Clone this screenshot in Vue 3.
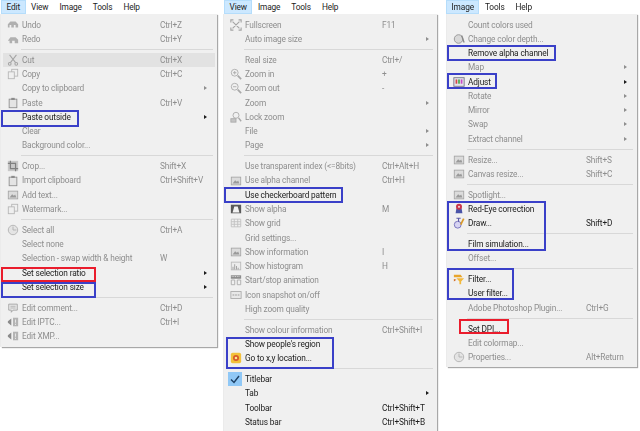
<script setup>
const S = { sep: true }
const d = (t, k = '', icon = '', sub = false) => ({ t, k, icon, sub, on: false })
const e = (t, k = '', icon = '', sub = false) => ({ t, k, icon, sub, on: true })

const panels = [
  {
    cls: 'p1',
    tabs: ['Edit', 'View', 'Image', 'Tools', 'Help'],
    items: [
      d('Undo', 'Ctrl+Z', 'undo'), d('Redo', 'Ctrl+Y', 'redo'), S,
      { ...d('Cut', 'Ctrl+X', 'cut'), hover: true }, d('Copy', 'Ctrl+C', 'copy'), d('Copy to clipboard', '', '', true),
      d('Paste', 'Ctrl+V', 'paste'), e('Paste outside', '', '', true), d('Clear'), d('Background color...'), S,
      d('Crop...', 'Shift+X', 'crop'), d('Import clipboard', 'Ctrl+Shift+V', 'paste'), d('Add text...', '', 'pic'), d('Watermark...', '', 'copy'), S,
      d('Select all', 'Ctrl+A', 'round'), d('Select none'), d('Selection - swap width & height', 'W'),
      e('Set selection ratio', '', '', true), e('Set selection size', '', '', true), S,
      d('Edit comment...', 'Ctrl+D', 'bubble'), d('Edit IPTC...', 'Ctrl+I', 'speak'), d('Edit XMP...', '', 'speak')
    ],
    marks: [
      { c: 'blue', x: 1, y: 110, w: 78, h: 17 },
      { c: 'red', x: 1, y: 267, w: 95, h: 15 },
      { c: 'blue', x: 1, y: 282, w: 95, h: 16 }
    ]
  },
  {
    cls: 'p2',
    tabs: ['View', 'Image', 'Tools', 'Help'],
    items: [
      d('Fullscreen', 'F11', 'full'), d('Auto image size', '', '', true), S,
      d('Real size', 'Ctrl+/'), d('Zoom in', '+', 'zin'), d('Zoom out', '-', 'zout'), d('Zoom', '', '', true),
      d('Lock zoom', '', 'zlock'), d('File', '', '', true), d('Page', '', '', true), S,
      d('Use transparent index (<=8bits)', 'Ctrl+Alt+H'), d('Use alpha channel', 'Ctrl+H', 'pic'), e('Use checkerboard pattern'),
      d('Show alpha', 'M', 'alpha'), d('Show grid', '', 'grid'), d('Grid settings...'), d('Show information', 'I', 'pic'),
      d('Show histogram', 'H', 'hist'), d('Start/stop animation', '', 'film'), d('Icon snapshot on/off', '', 'snap'), d('High zoom quality'), S,
      d('Show colour information', 'Ctrl+Shift+I'), e("Show people's region"), e('Go to x,y location...', '', 'goto'), S,
      { ...e('Titlebar'), check: true }, e('Tab', '', '', true), e('Toolbar', 'Ctrl+Shift+T'), e('Status bar', 'Ctrl+Shift+B')
    ],
    marks: [
      { c: 'blue', x: 4, y: 187, w: 119, h: 16 },
      { c: 'blue', x: 6, y: 337, w: 108, h: 32 }
    ]
  },
  {
    cls: 'p3',
    tabs: ['Image', 'Tools', 'Help'],
    items: [
      d('Count colors used'), d('Change color depth...', '', 'depth'), e('Remove alpha channel'), d('Map', '', '', true),
      e('Adjust', '', 'adjust', true), d('Rotate', '', '', true), d('Mirror', '', '', true), d('Swap', '', '', true), d('Extract channel', '', '', true), S,
      d('Resize...', 'Shift+S', 'pic'), d('Canvas resize...', 'Shift+C', 'pic'), S,
      d('Spotlight...', '', 'pic'), e('Red-Eye correction', '', 'redeye'), e('Draw...', 'Shift+D', 'draw'), S,
      e('Film simulation...'), d('Offset...'), S,
      e('Filter...', '', 'filter'), e('User filter...'), d('Adobe Photoshop Plugin...', 'Ctrl+G'), S,
      e('Set DPI...'), d('Edit colormap...'), d('Properties...', 'Alt+Return', 'round')
    ],
    marks: [
      { c: 'blue', x: 7, y: 45, w: 109, h: 16 },
      { c: 'blue', x: 7, y: 73, w: 50, h: 16 },
      { c: 'blue', x: 7, y: 201, w: 99, h: 50 },
      { c: 'blue', x: 7, y: 268, w: 67, h: 32 },
      { c: 'red', x: 19, y: 319, w: 50, h: 15 }
    ]
  }
]

const box = (m) => ({ left: m.x + 'px', top: m.y + 'px', width: m.w + 'px', height: m.h + 'px' })
</script>

<template>
  <div class="page">
    <section v-for="p in panels" :key="p.cls" class="panel" :class="p.cls">
      <nav class="bar">
        <span v-for="(t, i) in p.tabs" :key="t" class="tab" :class="{ active: i === 0 }">{{ t }}</span>
      </nav>
      <ul class="menu">
        <template v-for="(it, i) in p.items" :key="i">
          <li v-if="it.sep" class="sep"></li>
          <li v-else class="row" :class="{ on: it.on, hover: it.hover }">
            <span class="ico" :class="{ check: it.check }">
              <svg v-if="it.check" viewBox="0 0 12 12" width="12" height="12"><path d="M2 6.5 5 9.5 10 3" fill="none" stroke="#1c3f63" stroke-width="1.4"/></svg>
              <svg v-else-if="it.icon" viewBox="0 0 14 14" width="12" height="12">
                <g v-if="it.icon === 'undo'" fill="#b0b0b0"><path d="M1 10V6l3-3h6l3 3v4h-3V7H8v3H5V7H3v3z"/></g>
                <g v-else-if="it.icon === 'redo'" fill="#b0b0b0"><path d="M1 9l3-4h6l3 3v4H9V9H6v3H3V9z"/></g>
                <g v-else-if="it.icon === 'cut'" fill="none" stroke="#a4a4a4" stroke-width="1.2"><path d="M3 1l7 9M11 1l-7 9"/><circle cx="3.2" cy="11.5" r="1.6"/><circle cx="10.8" cy="11.5" r="1.6"/></g>
                <g v-else-if="it.icon === 'copy'" fill="#efefef" stroke="#b4b4b4"><rect x="5.5" y="1.5" width="7" height="8"/><rect x="1.5" y="4.5" width="7" height="8"/></g>
                <g v-else-if="it.icon === 'paste'" fill="#e4e4e4" stroke="#8c8c8c"><rect x="2.5" y="2.5" width="9" height="10"/><rect x="5" y="1" width="4" height="2.5" fill="#8c8c8c" stroke="none"/></g>
                <g v-else-if="it.icon === 'crop'" fill="none" stroke="#808080" stroke-width="1.4"><rect x="1" y="1" width="12" height="12" fill="#c8c8c8" stroke="none"/><path d="M4 1v9h9M1 4h9v9"/></g>
                <g v-else-if="it.icon === 'pic'"><rect x="1.5" y="2.5" width="11" height="9" fill="#dcdcdc" stroke="#a4a4a4"/><path d="M3 10l3-4 2 2 1.500-1.500L11 10z" fill="#9a9a9a"/></g>
                <g v-else-if="it.icon === 'round'"><circle cx="7" cy="7" r="5.500" fill="#e4e4e4" stroke="#b0b0b0"/><path d="M7 3v4h4" fill="none" stroke="#b0b0b0"/></g>
                <g v-else-if="it.icon === 'bubble'"><path d="M2 2.500h10v7H7l-2 2.500V9.500H2z" fill="#e8e8e8" stroke="#a0a0a0"/><path d="M4 5h6M4 7h6" stroke="#b0b0b0"/></g>
                <g v-else-if="it.icon === 'speak'" fill="#8c8c8c"><path d="M1 6l4-3v8L1 8z"/><rect x="7" y="2" width="6" height="10" fill="#b4b4b4"/><path d="M9.500 4h1v4h-1zM9.500 9h1v1.500h-1z" fill="#eee"/></g>
                <g v-else-if="it.icon === 'full'" fill="none" stroke="#a4a4a4" stroke-width="1.3"><path d="M1 4V1h3M10 1h3v3M13 10v3h-3M4 13H1v-3M3 3l8 8M11 3l-8 8"/></g>
                <g v-else-if="it.icon === 'zin' || it.icon === 'zout'" fill="none" stroke="#a8a8a8"><circle cx="5.500" cy="5.500" r="4"/><path d="M3.500 5.500h4" /><path v-if="it.icon === 'zin'" d="M5.500 3.500v4"/><path d="M9 9l4 4" stroke-width="2"/></g>
                <g v-else-if="it.icon === 'zlock'" fill="none" stroke="#a8a8a8"><circle cx="7" cy="5" r="3.500"/><path d="M10 8l3 4" stroke-width="1.600"/><rect x="1" y="9" width="6" height="4" fill="#c4c4c4"/></g>
                <g v-else-if="it.icon === 'alpha'"><rect x="1" y="2" width="12" height="10" fill="#5a5a5a"/><path d="M3 11l2-7h4l2 7z" fill="#f2f2f2"/></g>
                <g v-else-if="it.icon === 'grid'" fill="none" stroke="#c0c0c0"><path d="M1.500 2.500h11v9h-11zM1.500 5.500h11M1.500 8.500h11M5 2.500v9M9 2.500v9"/></g>
                <g v-else-if="it.icon === 'hist'"><rect x="1.500" y="2.500" width="11" height="9" fill="#ececec" stroke="#b8b8b8"/><path d="M3 11V8h1v3zM5 11V5h1v6zM7 11V7h1v4zM9 11V9h1v2z" fill="#989898"/></g>
                <g v-else-if="it.icon === 'film'"><rect x="1" y="1.500" width="12" height="4" fill="#8c8c8c"/><path d="M2 3h1M4 3h1M6 3h1M8 3h1M10 3h1" stroke="#eee"/><path d="M1.500 7v5.500h4V7zM8.500 7v5.500h4V7z" fill="none" stroke="#aaa"/></g>
                <g v-else-if="it.icon === 'snap'"><rect x="1" y="3" width="12" height="8" fill="#e8e8e8" stroke="#a8a8a8"/><path d="M3 7h8" stroke="#909090" stroke-dasharray="2 1"/></g>
                <g v-else-if="it.icon === 'goto'"><rect x="1" y="1" width="12" height="12" rx="2" fill="#f3c13a"/><circle cx="7" cy="7" r="3.500" fill="#d6572a"/><circle cx="7" cy="7" r="1.500" fill="#fbe68c"/></g>
                <g v-else-if="it.icon === 'depth'"><circle cx="6.500" cy="7" r="5" fill="#d8d8d8" stroke="#909090"/><path d="M10 3l3 8" stroke="#888" stroke-width="1.500"/></g>
                <g v-else-if="it.icon === 'adjust'"><rect x="1" y="2" width="12" height="10" fill="#e4e4ec" stroke="#6f6f80"/><rect x="3" y="4" width="2" height="5" fill="#d64545"/><rect x="6" y="4" width="2" height="5" fill="#49a84f"/><rect x="9" y="4" width="2" height="5" fill="#c948c4"/></g>
                <g v-else-if="it.icon === 'redeye'"><path d="M4 6h6l1 6H3z" fill="#4a54a8"/><circle cx="7" cy="4.500" r="3.500" fill="#c8344a"/><circle cx="7" cy="4.500" r="1.200" fill="#f4d6d6"/></g>
                <g v-else-if="it.icon === 'draw'"><circle cx="5.500" cy="9" r="4" fill="#d7d4f2" stroke="#6d68b8"/><path d="M4 1.500h5M6.500 1.500v4" stroke="#5a58a8" stroke-width="1.300"/><path d="M9 9l3.500-7" stroke="#d99a2b" stroke-width="2"/></g>
                <g v-else-if="it.icon === 'filter'"><path d="M1 2h8l2 3H1z" fill="#e8a52c"/><path d="M4 6h9L9.500 10v3h-2v-3z" fill="#f2b93c"/><path d="M1 7l3 1-3 2z" fill="#d2691e"/></g>
              </svg>
            </span>
            <span class="label">{{ it.t }}</span>
            <span class="key">{{ it.k }}</span>
            <span v-if="it.sub" class="arrow"></span>
          </li>
        </template>
      </ul>
      <i v-for="(m, i) in p.marks" :key="i" class="mark" :class="m.c" :style="box(m)"></i>
    </section>
  </div>
</template>

<style>
html, body { margin: 0; background: #fff; }
</style>

<style scoped>
.page {
  width: 640px;
  height: 431px;
  overflow: hidden;
  display: flex;
  font-family: "Roboto", "Noto Sans", sans-serif;
  font-size: 8.3px;
  letter-spacing: -0.14px;
  color: #1c1c1c;
}
.panel { position: relative; flex: none; filter: blur(0.3px); }
.p1 { width: 220px; }
.p2 { width: 220px; }
.p3 { width: 200px; }
.bar { display: flex; height: 14px; padding-left: 1px; align-items: center; background: #fff; }
.p2 .bar { padding-left: 4px; }
.p3 .bar { padding-left: 6px; }
.tab { padding: 0 5.5px; height: 14px; line-height: 14px; box-sizing: border-box; }
.tab.active { background: #cce8ff; box-shadow: inset 0 0 0 1px #b5ddfb; }
.menu {
  list-style: none;
  margin: 0;
  padding: 3.6px 2px 3px 2px;
  background: #f0f0f0;
  box-shadow: 1px 1px 1px #a8a8a8, -0.5px 0 0 #d8d8d8;
  box-sizing: border-box;
}
.p1 .menu { width: 216px; margin-left: 1px; }
.p2 .menu { width: 213px; margin-left: 4px; }
.p3 .menu { width: 190px; margin-left: 7px; }
.row {
  height: 14.28px;
  line-height: 14.28px;
  display: flex;
  align-items: center;
  position: relative;
  color: #8e8e8e;
  white-space: nowrap;
}
.row.on { color: #1c1c1c; }
.row.hover { background: #e2e2e2; }
.ico { width: 19px; height: 14px; flex: none; display: flex; align-items: center; justify-content: center; }
.ico.check { background: #90c8f6; width: 14px; margin: 0 3px 0 2px; }
.label { flex: 1; min-width: 0; }
.key { flex: none; }
.p1 .key { width: 55px; }
.p2 .key { width: 53px; }
.p3 .key { width: 49px; }
.arrow {
  position: absolute;
  right: 8px;
  top: 5px;
  border-left: 3px solid currentColor;
  border-top: 2px solid transparent;
  border-bottom: 2px solid transparent;
}
.p2 .arrow { right: 6px; }
.sep { height: 1px; margin: 2.85px 2px 2.75px 18px; background: #d8d8d8; }
.mark { position: absolute; box-sizing: border-box; border: 2px solid; }
.blue { border-color: #3a40c8; }
.red { border-color: #ea1c2c; }
</style>
